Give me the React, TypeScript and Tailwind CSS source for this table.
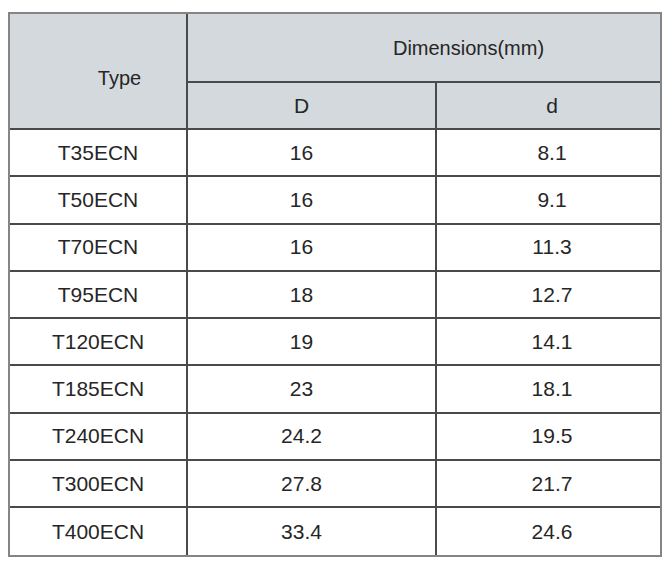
import React from "react";

const rows: [string, string, string][] = [
  ["T35ECN", "16", "8.1"],
  ["T50ECN", "16", "9.1"],
  ["T70ECN", "16", "11.3"],
  ["T95ECN", "18", "12.7"],
  ["T120ECN", "19", "14.1"],
  ["T185ECN", "23", "18.1"],
  ["T240ECN", "24.2", "19.5"],
  ["T300ECN", "27.8", "21.7"],
  ["T400ECN", "33.4", "24.6"],
];

export default function App() {
  return (
    <div
      className="w-[672px] h-[572px] bg-white pt-[12px] pl-[8px] text-[20px] text-[#262626]"
      style={{ fontFamily: '"Liberation Sans", Arial, sans-serif' }}
    >
      <div className="w-[654px] border-2 border-[#858585] bg-white">
        <div className="flex h-[116px] border-b-2 border-[#4a4a4a] bg-[#d4d9dd]">
          <div className="w-[178px] border-r-2 border-[#4a4a4a] flex items-center justify-center pl-[43px] pt-[13px]">
            Type
          </div>
          <div className="flex-1 flex flex-col">
            <div className="h-[69px] border-b-2 border-[#4a4a4a] flex items-center justify-center pl-[89px]">
              Dimensions(mm)
            </div>
            <div className="flex flex-1 text-[21px]">
              <div className="w-[249px] border-r-2 border-[#4a4a4a] flex items-center justify-center pr-5">
                D
              </div>
              <div className="flex-1 flex items-center justify-center pl-[7px]">d</div>
            </div>
          </div>
        </div>
        {rows.map((r, i) => (
          <div
            key={r[0]}
            className={
              "flex h-[47.25px] text-[21px] " +
              (i < rows.length - 1 ? "border-b-2 border-[#4a4a4a]" : "")
            }
          >
            <div className="w-[178px] border-r-2 border-[#4a4a4a] flex items-center justify-center">
              {r[0]}
            </div>
            <div className="w-[249px] border-r-2 border-[#4a4a4a] flex items-center justify-center pr-5">
              {r[1]}
            </div>
            <div className="flex-1 flex items-center justify-center pl-[7px]">{r[2]}</div>
          </div>
        ))}
      </div>
    </div>
  );
}
